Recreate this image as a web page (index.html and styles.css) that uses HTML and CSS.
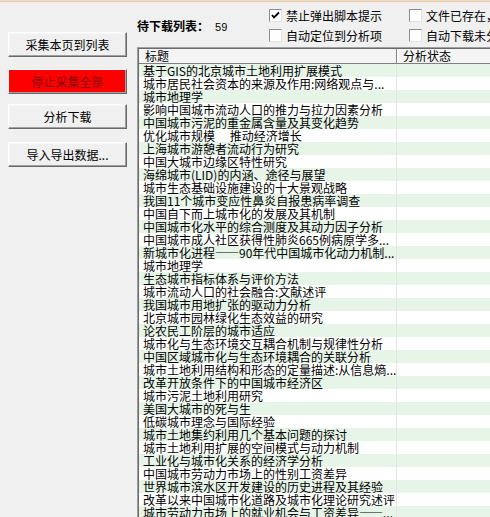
FILE: index.html
```html
<!DOCTYPE html>
<html lang="zh-CN">
<head>
<meta charset="utf-8">
<title>待下载列表</title>
<link rel="stylesheet" href="styles.css">
</head>
<body>
<div class="topline"></div>
<div class="main">
  <div class="side">
    <button class="btn btn-1">采集本页到列表</button>
    <button class="btn btn-stop">停止采集全部</button>
    <button class="btn btn-3">分析下载</button>
    <button class="btn btn-4">导入导出数据...</button>
  </div>
  <div class="content">
    <div class="toolbar">
      <div class="count"><span class="count-label">待下载列表：</span><span class="num">59</span></div>
      <div class="opts">
        <div class="opt"><span class="box"><svg viewBox="0 0 13 13" width="13" height="13"><polyline points="3,6 5,8.5 10,3.5" fill="none" stroke="#000" stroke-width="1.8"/></svg></span>禁止弹出脚本提示</div>
        <div class="opt"><span class="box"></span>文件已存在，跳过</div>
        <div class="opt"><span class="box"></span>自动定位到分析项</div>
        <div class="opt"><span class="box"></span>自动下载未分析项</div>
      </div>
    </div>
    <div class="list">
      <div class="list-inner">
        <div class="head"><div class="hcell h-title">标题</div><div class="hcell h-status">分析状态</div></div>
        <div class="row"><div class="c1">基于GIS的北京城市土地利用扩展模式</div><div class="c2"></div></div>
        <div class="row"><div class="c1">城市居民社会资本的来源及作用:网络观点与...</div><div class="c2"></div></div>
        <div class="row"><div class="c1">城市地理学</div><div class="c2"></div></div>
        <div class="row"><div class="c1">影响中国城市流动人口的推力与拉力因素分析</div><div class="c2"></div></div>
        <div class="row"><div class="c1">中国城市污泥的重金属含量及其变化趋势</div><div class="c2"></div></div>
        <div class="row"><div class="c1">优化城市规模　 推动经济增长</div><div class="c2"></div></div>
        <div class="row"><div class="c1">上海城市游憩者流动行为研究</div><div class="c2"></div></div>
        <div class="row"><div class="c1">中国大城市边缘区特性研究</div><div class="c2"></div></div>
        <div class="row"><div class="c1">海绵城市(LID)的内涵、途径与展望</div><div class="c2"></div></div>
        <div class="row"><div class="c1">城市生态基础设施建设的十大景观战略</div><div class="c2"></div></div>
        <div class="row"><div class="c1">我国11个城市变应性鼻炎自报患病率调查</div><div class="c2"></div></div>
        <div class="row"><div class="c1">中国自下而上城市化的发展及其机制</div><div class="c2"></div></div>
        <div class="row"><div class="c1">中国城市化水平的综合测度及其动力因子分析</div><div class="c2"></div></div>
        <div class="row"><div class="c1">中国城市成人社区获得性肺炎665例病原学多...</div><div class="c2"></div></div>
        <div class="row"><div class="c1">新城市化进程——90年代中国城市化动力机制...</div><div class="c2"></div></div>
        <div class="row"><div class="c1">城市地理学</div><div class="c2"></div></div>
        <div class="row"><div class="c1">生态城市指标体系与评价方法</div><div class="c2"></div></div>
        <div class="row"><div class="c1">城市流动人口的社会融合:文献述评</div><div class="c2"></div></div>
        <div class="row"><div class="c1">我国城市用地扩张的驱动力分析</div><div class="c2"></div></div>
        <div class="row"><div class="c1">北京城市园林绿化生态效益的研究</div><div class="c2"></div></div>
        <div class="row"><div class="c1">论农民工阶层的城市适应</div><div class="c2"></div></div>
        <div class="row"><div class="c1">城市化与生态环境交互耦合机制与规律性分析</div><div class="c2"></div></div>
        <div class="row"><div class="c1">中国区域城市化与生态环境耦合的关联分析</div><div class="c2"></div></div>
        <div class="row"><div class="c1">城市土地利用结构和形态的定量描述:从信息熵...</div><div class="c2"></div></div>
        <div class="row"><div class="c1">改革开放条件下的中国城市经济区</div><div class="c2"></div></div>
        <div class="row"><div class="c1">城市污泥土地利用研究</div><div class="c2"></div></div>
        <div class="row"><div class="c1">美国大城市的死与生</div><div class="c2"></div></div>
        <div class="row"><div class="c1">低碳城市理念与国际经验</div><div class="c2"></div></div>
        <div class="row"><div class="c1">城市土地集约利用几个基本问题的探讨</div><div class="c2"></div></div>
        <div class="row"><div class="c1">城市土地利用扩展的空间模式与动力机制</div><div class="c2"></div></div>
        <div class="row"><div class="c1">工业化与城市化关系的经济学分析</div><div class="c2"></div></div>
        <div class="row"><div class="c1">中国城市劳动力市场上的性别工资差异</div><div class="c2"></div></div>
        <div class="row"><div class="c1">世界城市滨水区开发建设的历史进程及其经验</div><div class="c2"></div></div>
        <div class="row"><div class="c1">改革以来中国城市化道路及城市化理论研究述评</div><div class="c2"></div></div>
        <div class="row"><div class="c1">城市劳动力市场上的就业机会与工资差异——...</div><div class="c2"></div></div>
      </div>
    </div>
  </div>
</div>
</body>
</html>
```

FILE: styles.css
```css
html, body {
  margin: 0;
  padding: 0;
  width: 490px;
  height: 517px;
  overflow: hidden;
  background: #f0f0f0;
  font-family: "Noto Sans CJK SC", "Liberation Sans", sans-serif;
  font-size: 12px;
  color: #000;
}

.topline {
  height: 2px;
  background: #f3dcc2;
  border-bottom: 1px solid #e6c9a8;
  box-sizing: border-box;
}

.main {
  display: flex;
  height: 515px;
}

.side {
  width: 137px;
  flex: none;
  display: flex;
  flex-direction: column;
  padding-left: 8px;
  box-sizing: border-box;
}

.btn {
  width: 119px;
  height: 25px;
  padding: 0;
  font-family: "Noto Sans CJK SC", "Liberation Sans", sans-serif;
  font-size: 12px;
  line-height: 1;
  color: #000;
  background: #f0f0f0;
  border: 1px solid;
  border-color: #ffffff #696969 #696969 #ffffff;
  box-shadow: inset -1px -1px 0 #a0a0a0, inset 1px 1px 0 #f8f8f8;
}

.btn-1 { margin-top: 30px; }
.btn-stop {
  margin-top: 12px;
  background: #ff0000;
  color: #850000;
  box-shadow: inset -1px -1px 0 #a0a0a0;
}
.btn-3 { margin-top: 10px; }
.btn-4 { margin-top: 13px; }

.content {
  flex: none;
  width: 400px;
  display: flex;
  flex-direction: column;
}

.toolbar {
  height: 45px;
  display: flex;
  align-items: flex-start;
}

.count {
  width: 132px;
  flex: none;
  padding-top: 15px;
  white-space: nowrap;
}

.count-label {
  font-weight: bold;
}

.num {
  margin-left: 6px;
  font-family: "Liberation Sans", sans-serif;
  font-size: 11px;
}

.opts {
  display: grid;
  grid-template-columns: 140px 140px;
  grid-auto-rows: 20px;
  padding-top: 7px;
  white-space: nowrap;
}

.opt {
  display: flex;
  align-items: flex-start;
  gap: 4px;
  line-height: 13px;
}

.box {
  width: 13px;
  height: 13px;
  box-sizing: border-box;
  flex: none;
  background: #fff;
  border: 1px solid;
  border-color: #8d8d8d #e2e2e2 #e2e2e2 #8d8d8d;
  display: flex;
  align-items: center;
  justify-content: center;
}

.box svg {
  display: block;
  flex: none;
  margin: -1px;
}

.list {
  flex: 1;
  border-top: 1px solid #a0a0a0;
  border-left: 1px solid #a0a0a0;
  background: #fff;
  overflow: hidden;
}

.list-inner {
  border-top: 1px solid #696969;
  border-left: 1px solid #696969;
  height: 100%;
}

.head {
  display: flex;
  height: 15px;
  background: #f4f4f4;
  border-bottom: 1px solid #808080;
  box-sizing: border-box;
}

.hcell {
  line-height: 14px;
  padding-left: 6px;
  white-space: nowrap;
  box-sizing: border-box;
}

.h-title {
  width: 258px;
  border-right: 1px solid #808080;
  box-shadow: 1px 0 0 #fff;
}

.h-status {
  flex: 1;
}

.row {
  display: flex;
  height: 13px;
  line-height: 13px;
  background: #fff;
}

.row:nth-of-type(even) {
  background: #e7f4e8;
}

.c1 {
  width: 258px;
  padding-left: 4px;
  box-sizing: border-box;
  white-space: nowrap;
  overflow: visible;
  border-right: 1px solid #e4e4e4;
}

.c2 {
  flex: 1;
}
```
